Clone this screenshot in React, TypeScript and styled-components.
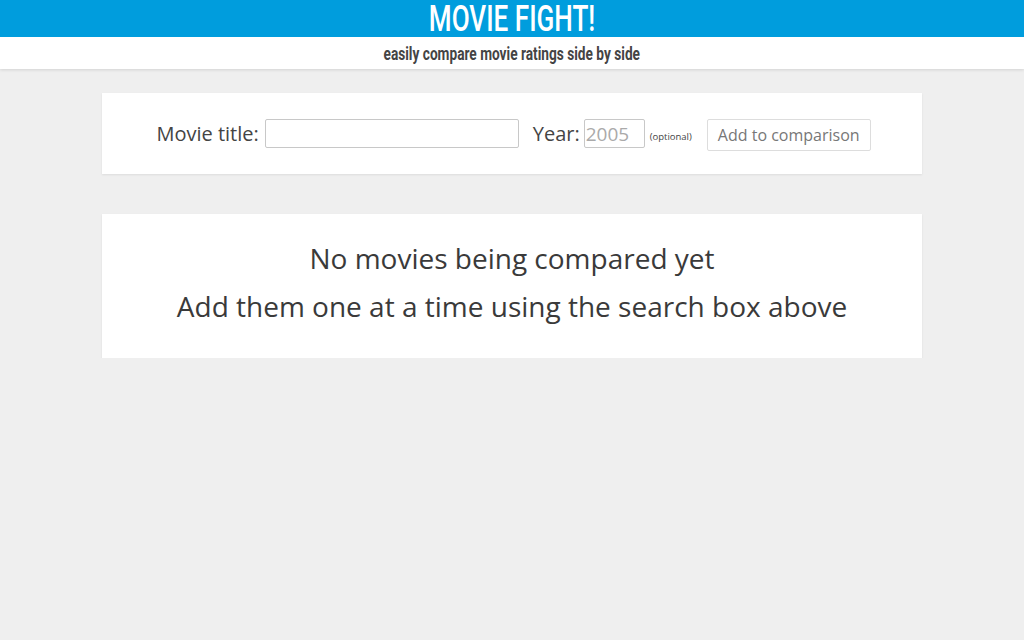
import React from "react";
import styled, { createGlobalStyle } from "styled-components";

const Global = createGlobalStyle`
  html, body { margin: 0; padding: 0; background: #efefef; }
  body { font-family: "Open Sans", "Liberation Sans", sans-serif; color: #444; }
`;

const Header = styled.header`
  display: flex;
  flex-direction: column;
  box-shadow: 0 1px 3px rgba(0,0,0,0.12);
`;

const TitleBar = styled.div`
  background: #009ddd;
  height: 37px;
  display: flex;
  align-items: center;
  justify-content: center;
`;

const Title = styled.h1`
  margin: 0;
  font-family: Roboto, "DejaVu Sans Condensed", sans-serif;
  font-weight: 500;
  font-size: 37px;
  color: #fff;
  line-height: 37px;
  transform: scaleX(0.705);
  white-space: nowrap;
`;

const SubBar = styled.div`
  background: #fff;
  height: 32px;
  display: flex;
  align-items: center;
  justify-content: center;
`;

const Subtitle = styled.p`
  margin: 0;
  font-family: Roboto, "DejaVu Sans Condensed", sans-serif;
  font-weight: 700;
  font-size: 18px;
  color: #444;
  transform: scaleX(0.76);
  white-space: nowrap;
`;

const Main = styled.main`
  max-width: 820px;
  margin: 24px auto 0;
  display: flex;
  flex-direction: column;
  gap: 40px;
`;

const Card = styled.section<{ $pad: string }>`
  background: #fff;
  box-shadow: 0 1px 2px rgba(0,0,0,0.08);
  padding: ${(p) => p.$pad};
`;

const Form = styled.form`
  display: flex;
  align-items: center;
  justify-content: center;
  height: 81px;
  padding-left: 3px;
`;

const Label = styled.label<{ $gap: number }>`
  font-size: 20px;
  color: #444;
  margin-right: ${(p) => p.$gap}px;
`;

const TextInput = styled.input<{ $w: number }>`
  width: ${(p) => p.$w}px;
  height: 29px;
  box-sizing: border-box;
  border: 1px solid #c8c8c8;
  border-radius: 2px;
  font-family: "Open Sans", sans-serif;
  font-size: 19px;
  padding: 0 0 0 1px;
  color: #444;
  &::placeholder { color: #aaa; }
`;

const Optional = styled.span`
  font-size: 9.5px;
  color: #444;
  margin: 6px 15px 0 5px;
`;

const Button = styled.button`
  height: 32px;
  box-sizing: border-box;
  padding: 0 10px;
  background: #fff;
  border: 1px solid #ddd;
  border-radius: 2px;
  font-family: "Open Sans", sans-serif;
  font-size: 16px;
  color: #777;
  margin-top: 2px;
`;

const Spacer = styled.span`
  width: 14px;
`;

const Message = styled.p`
  margin: 0;
  text-align: center;
  font-size: 28px;
  line-height: 48px;
  color: #3a3a3a;
`;

export default function App() {
  return (
    <>
      <Global />
      <Header>
        <TitleBar>
          <Title>MOVIE FIGHT!</Title>
        </TitleBar>
        <SubBar>
          <Subtitle>easily compare movie ratings side by side</Subtitle>
        </SubBar>
      </Header>
      <Main>
        <Card $pad="0">
          <Form onSubmit={(e) => e.preventDefault()}>
            <Label $gap={6}>Movie title:</Label>
            <TextInput $w={254} type="text" />
            <Spacer />
            <Label $gap={4}>Year:</Label>
            <TextInput $w={61} type="text" placeholder="2005" />
            <Optional>(optional)</Optional>
            <Button type="submit">Add to comparison</Button>
          </Form>
        </Card>
        <Card $pad="20px 0 28px">
          <Message>No movies being compared yet</Message>
          <Message>Add them one at a time using the search box above</Message>
        </Card>
      </Main>
    </>
  );
}
